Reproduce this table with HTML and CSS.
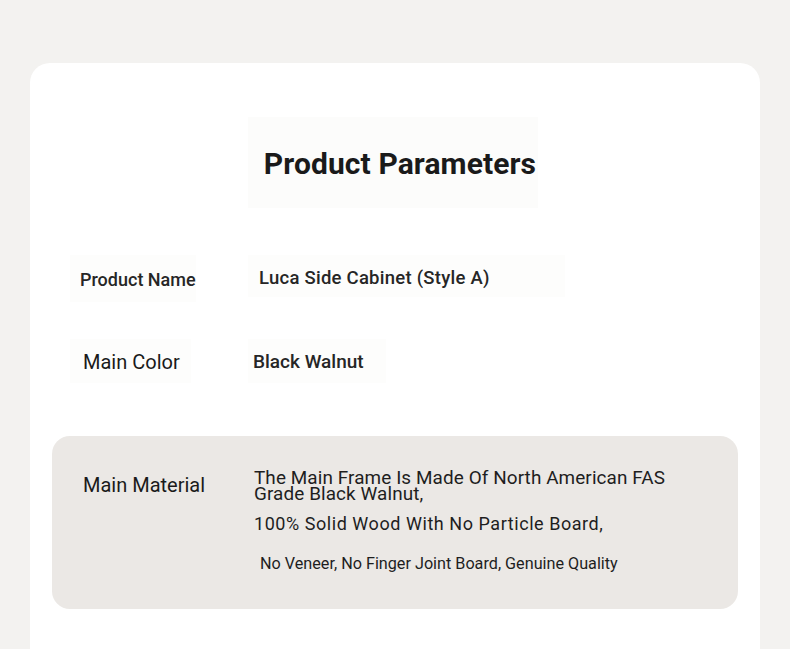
FILE: index.html
```html
<!DOCTYPE html>
<html lang="en">
<head>
<meta charset="utf-8">
<title>Product Parameters</title>
<link rel="stylesheet" href="styles.css">
</head>
<body>
<main class="card">
  <header class="title-wrap">
    <h1 class="title">Product Parameters</h1>
  </header>
  <section class="params">
    <div class="row row-name">
      <div class="label"><span class="chip">Product Name</span></div>
      <div class="value"><span class="chip">Luca Side Cabinet (Style A)</span></div>
    </div>
    <div class="row row-color">
      <div class="label"><span class="chip">Main Color</span></div>
      <div class="value"><span class="chip">Black Walnut</span></div>
    </div>
    <div class="row row-material">
      <div class="label"><span class="chip">Main Material</span></div>
      <div class="value">
        <p class="line l1">The Main Frame Is Made Of North American FAS<br>Grade Black Walnut,</p>
        <p class="line l2">100% Solid Wood With No Particle Board,</p>
        <p class="line l3">No Veneer, No Finger Joint Board, Genuine Quality</p>
      </div>
    </div>
  </section>
</main>
</body>
</html>
```
FILE: styles.css
```css
html, body {
  margin: 0;
  padding: 0;
}
body {
  background: #f3f2f0;
  font-family: Roboto, "Liberation Sans", sans-serif;
  color: #1e1e1e;
  height: 649px;
  overflow: hidden;
}
.card {
  margin: 63px 30px 0 30px;
  background: #ffffff;
  border-radius: 20px 20px 0 0;
  height: 640px;
  padding-top: 54px;
  box-sizing: border-box;
}
.title-wrap {
  display: flex;
  justify-content: center;
  padding-right: 4px;
}
.title {
  margin: 0;
  background: #fcfcfb;
  padding: 28px 2px 26px 16px;
  font-size: 30px;
  font-weight: 700;
  line-height: 37px;
  color: #1a1a1a;
  letter-spacing: 0.1px;
}
.params {
  padding: 0 22px;
  margin-top: 47px;
}
.row {
  display: flex;
  align-items: flex-start;
}
.label {
  width: 196px;
  flex: none;
}
.chip {
  display: inline-block;
  white-space: nowrap;
  background: #fdfdfc;
}
.row-name {
  height: 84px;
}
.row-name .label .chip {
  font-size: 18px;
  font-weight: 500;
  padding: 14px 0 11px 10px;
  line-height: 22px;
  margin-left: 18px;
  color: #262626;
}
.row-name .value .chip {
  font-size: 18.5px;
  font-weight: 500;
  line-height: 24px;
  padding: 11px 75px 7px 11px;
  letter-spacing: 0.25px;
  color: #262626;
}
.row-color {
  height: 97px;
}
.row-color .label .chip {
  font-size: 20px;
  font-weight: 400;
  line-height: 26px;
  margin-left: 18px;
  padding: 10px 11px 8px 13px;
  color: #1a1a1a;
}
.row-color .value .chip {
  font-size: 19px;
  font-weight: 500;
  line-height: 24px;
  padding: 11px 22px 9px 5px;
  color: #262626;
}
.row-material {
  background: #ebe8e5;
  border-radius: 18px;
  height: 173px;
  box-sizing: border-box;
  padding-top: 34px;
}
.row-material .label .chip {
  background: transparent;
  font-size: 20px;
  font-weight: 400;
  line-height: 30px;
  padding-left: 31px;
  color: #1a1a1a;
}
.row-material .value {
  padding-left: 6px;
}
.line {
  margin: 0;
  color: #1e1e1e;
}
.l1 {
  font-size: 18.9px;
  line-height: 16px;
  letter-spacing: 0.1px;
}
.l2 {
  font-size: 18px;
  margin-top: 10px;
  line-height: 24px;
  letter-spacing: 0.55px;
}
.l3 {
  font-size: 16.2px;
  margin-top: 17px;
  line-height: 22px;
  padding-left: 6px;
}
```
